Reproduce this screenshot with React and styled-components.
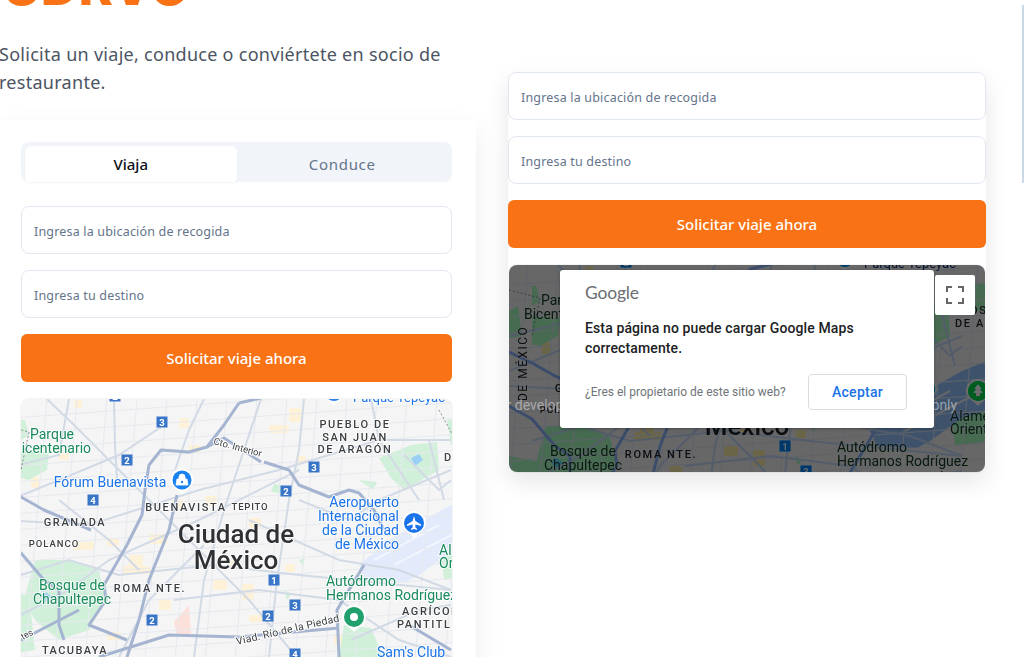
import styled, { createGlobalStyle } from 'styled-components';

const GlobalStyle = createGlobalStyle`
  html, body {
    margin: 0;
    padding: 0;
    background: #fff;
    overflow: hidden;
  }
  * { box-sizing: border-box; }
`;

const Page = styled.div`
  position: relative;
  width: 1024px;
  height: 657px;
  overflow: hidden;
  background: #fff;
  font-family: "Noto Sans", "Open Sans", sans-serif;
  display: grid;
  grid-template-columns: 476px 478px;
  column-gap: 32px;
  align-items: start;
`;

const ScrollThumb = styled.div`
  position: absolute;
  top: 5px;
  right: 0;
  width: 2px;
  height: 178px;
  background: #cbd9e6;
`;

const LeftColumn = styled.div`
  display: flex;
  flex-direction: column;
`;

const Brand = styled.h1`
  margin: -38px 0 0 3px;
  height: 50px;
  font-family: Inter, sans-serif;
  font-size: 52px;
  line-height: 50px;
  font-weight: 800;
  color: #f97316;
  white-space: nowrap;
`;

const Tagline = styled.p`
  margin: 28px 0 0 -1px;
  width: 470px;
  font-size: 18px;
  line-height: 28px;
  letter-spacing: 0.28px;
  color: #4b5563;
`;

const Card = styled.section`
  margin-top: 24px;
  padding: 22px 24px 0 21px;
  background: #fff;
  box-shadow: 0 10px 25px rgba(0, 0, 0, 0.08);
  display: flex;
  flex-direction: column;
  gap: 24px;
`;

const Tabs = styled.div`
  display: flex;
  flex: none;
  height: 40px;
  padding: 4px 4px 0;
  background: #f1f5f9;
  border-radius: 8px;
`;

const Tab = styled.div`
  flex: 1;
  display: flex;
  align-items: center;
  justify-content: center;
  font-size: 15px;
  font-weight: ${(props) => (props.$active ? 500 : 400)};
  letter-spacing: ${(props) => (props.$active ? '0' : '0.7px')};
  border-radius: 6px 6px 4px 4px;
  color: ${(props) => (props.$active ? '#0b0f19' : '#64748b')};
  background: ${(props) => (props.$active ? '#fff' : 'transparent')};
  box-shadow: ${(props) => (props.$active ? '0 1px 2px rgba(0,0,0,0.05)' : 'none')};
`;

const RightColumn = styled.div`
  margin-top: 72px;
  background: #fff;
  border-radius: 8px;
  box-shadow: 0 10px 25px rgba(0, 0, 0, 0.1);
`;

const Form = styled.div`
  display: flex;
  flex-direction: column;
  gap: 16px;
`;

const Field = styled.input`
  display: block;
  width: 100%;
  height: 48px;
  padding: 3px 12px 0;
  border: 1px solid #e2e8f0;
  border-radius: 8px;
  background: #fff;
  font-family: inherit;
  font-size: 12.5px;
  letter-spacing: 0.18px;
  outline: none;

  &::placeholder {
    color: #64748b;
    opacity: 1;
  }
`;

const Submit = styled.button`
  height: 48px;
  border: 0;
  border-radius: 6px;
  background: #f97316;
  color: #fff;
  font-family: inherit;
  font-size: 15px;
  font-weight: 500;
`;

const MapFrame = styled.div`
  position: relative;
  flex: none;
  margin: 1px ${(props) => props.$inset}px 0;
  height: ${(props) => props.$height}px;
  overflow: hidden;
  border-radius: 8px;
  background: #f5f5f6;
  box-shadow: 0 0 0 1px rgba(0, 0, 0, 0.04);
`;

const MapCanvas = styled.svg`
  display: block;
  margin-left: ${(props) => props.$shift}px;
  filter: ${(props) => (props.$dimmed ? 'saturate(2.8) brightness(0.42) blur(0.35px)' : 'blur(0.35px)')};
`;

const Watermark = styled.span`
  position: absolute;
  top: 132px;
  left: ${(props) => props.$left}px;
  font-family: Roboto, sans-serif;
  font-size: 14px;
  color: rgba(255, 255, 255, 0.45);
  white-space: nowrap;
`;

const Dialog = styled.div`
  position: absolute;
  top: 5px;
  left: 51px;
  width: 374px;
  height: 158px;
  padding: 12px 27px 0 25px;
  background: #fff;
  border-radius: 3px;
  box-shadow: 0 1px 3px rgba(0, 0, 0, 0.3);
  font-family: Roboto, sans-serif;
`;

const GoogleMark = styled.div`
  font-family: Lato, Roboto, sans-serif;
  font-size: 17.5px;
  line-height: 22px;
  letter-spacing: -0.2px;
  color: #6b6e72;
`;

const Message = styled.p`
  margin: 14px 0 0;
  font-size: 14px;
  line-height: 20px;
  font-weight: 500;
  letter-spacing: 0.12px;
  color: #202124;
`;

const DialogFooter = styled.div`
  margin-top: 16px;
  display: flex;
  align-items: center;
  justify-content: space-between;
`;

const Owner = styled.span`
  font-size: 12px;
  color: #70757a;
`;

const Accept = styled.button`
  width: 99px;
  height: 36px;
  background: #fff;
  border: 1px solid #dadce0;
  border-radius: 4px;
  font-family: inherit;
  font-size: 14px;
  font-weight: 500;
  letter-spacing: 0.3px;
  color: #1a73e8;
`;

const Fullscreen = styled.div`
  position: absolute;
  top: 10px;
  right: 10px;
  width: 40px;
  height: 40px;
  display: flex;
  align-items: center;
  justify-content: center;
  background: #fff;
  border-radius: 2px;
`;

const MAJOR = [
  'M240 403L225 425L208 447L190 452L162 450L150 465L146 490L143 515L128 545L105 585L107 600L90 625L128 640',
  'M178 495L170 530L150 580L140 620L128 657',
  'M22 497L45 510L92 530',
  'M-1 486L22 497',
  'M-1 540L22 553L45 580L60 590L60 625L65 640',
  'M-1 655L22 640L80 610',
  'M100 657L170 635L240 637L340 628',
  'M265 462L290 470L300 485L330 497L350 490L360 493L375 510L385 530',
  'M365 565L350 590L338 610L340 657',
  'M410 625L452 650',
  'M240 403L262 398',
  'M208 447L225 438L262 462',
];

const MINOR = [
  'M48 399L75 425L120 470L150 500L190 540L250 600L300 660',
  'M115 399L116 445L118 480',
  'M-1 505L60 480L120 455L165 425',
  'M22 575L70 560L120 575L215 565L300 575L452 590',
  'M0 520L90 525L200 490L280 470L380 440L452 440',
  'M262 399L245 450L225 510L205 580L195 657',
  'M305 399L300 450L290 500L278 580L270 657',
  'M205 399L190 430L176 470',
  'M372 399L380 440L400 470L420 500',
  'M0 470L60 455L70 399',
  'M22 615L70 590L110 560L200 520L300 470',
  'M175 600L260 590L340 600L400 640L452 657',
  'M300 500L350 520L380 500L452 470',
  'M120 657L150 600L205 545',
  'M250 520L340 560L400 570L452 590',
  'M60 500L110 540L140 570',
  'M352 640L420 610L452 605',
  'M405 455L440 490L452 480',
  'M430 440L445 500',
];

const STREETS = [];
for (let i = 0; i < 17; i++) {
  const x = i * 30 - 12;
  STREETS.push(`M${x} 399L${x - 22} 660`);
  const y = 399 + i * 16;
  STREETS.push(`M-1 ${y + 20}L476 ${y - 14}`);
}

const BLOCKS = [
  [75, 400, 8, 8], [32, 476, 8, 12], [74, 542, 22, 8], [130, 555, 14, 16], [150, 534, 18, 10], [172, 500, 14, 8],
  [206, 496, 12, 10], [124, 566, 28, 8], [108, 632, 14, 8], [290, 408, 12, 14], [270, 425, 20, 8], [297, 456, 10, 7],
  [250, 518, 12, 10], [243, 584, 12, 16], [230, 560, 10, 8], [160, 600, 12, 10], [286, 564, 10, 8], [250, 615, 14, 7],
  [214, 580, 14, 10], [335, 635, 20, 10], [190, 445, 12, 8], [108, 538, 12, 8], [60, 452, 10, 8], [180, 418, 10, 10],
];

const PARKS = [
  'M22 420L26 420L30 435L22 440Z',
  'M22 450L50 452L48 470L30 480L22 478Z',
  'M36 560L70 560L100 570L106 600L90 630L60 640L36 620L25 600Z',
  'M-1 590L30 596L36 650L-1 657Z',
  'M380 458L412 445L438 442L440 470L405 490L392 478Z',
  'M275 484L290 487L288 494L272 492Z',
  'M360 480L378 482L374 490Z',
  'M345 625L372 628L384 657L340 657Z',
  'M440 535L476 525L476 575L445 580Z',
  'M285 590L292 594L288 600Z',
  'M300 560L306 558L304 566Z',
  'M448 420L476 416L476 445L452 445Z',
  'M-1 445L8 440L12 470L-1 472Z',
];

const SHIELDS = [
  [116, 396, '2'], [163, 422, '3'], [128, 460, '2'], [94, 500, '4'], [153, 620, '2'],
  [315, 467, '3'], [287, 491, '2'], [275, 580, '1'], [296, 605, '3'], [269, 616, '2'], [296, 654, '4'],
];

const GREEN = '#188a5c';
const BLUE = '#1a73e8';
const INK = '#3c4043';

const LABELS = [
  { x: 53, y: 439, s: 14, c: GREEN, t: 'Parque' },
  { x: 53, y: 453, s: 14, c: GREEN, t: 'Bicentenario' },
  { x: 111, y: 487, s: 14, c: BLUE, t: 'Fórum Buenavista' },
  { x: 187, y: 511, s: 11, c: INK, t: 'BUENAVISTA', w: 500, ls: 1.6 },
  { x: 251, y: 510, s: 9.5, c: INK, t: 'TEPITO', w: 500, ls: 0.8 },
  { x: 76, y: 526, s: 11, c: INK, t: 'GRANADA', w: 500, ls: 1.6 },
  { x: 55, y: 547, s: 9.5, c: INK, t: 'POLANCO', w: 500, ls: 1 },
  { x: 73, y: 590, s: 14, c: GREEN, t: 'Bosque de' },
  { x: 73, y: 604, s: 14, c: GREEN, t: 'Chapultepec' },
  { x: 151, y: 592, s: 11, c: INK, t: 'ROMA NTE.', w: 500, ls: 1.6 },
  { x: 76, y: 654, s: 11, c: INK, t: 'TACUBAYA', w: 500, ls: 1.4 },
  { x: 237, y: 543, s: 26, c: '#303134', t: 'Ciudad de', w: 500 },
  { x: 237, y: 569, s: 26, c: '#303134', t: 'México', w: 500 },
  { x: 356, y: 428, s: 11, c: INK, t: 'PUEBLO DE', w: 500, ls: 1.6 },
  { x: 356, y: 441, s: 11, c: INK, t: 'SAN JUAN', w: 500, ls: 1.6 },
  { x: 356, y: 453, s: 11, c: INK, t: 'DE ARAGÓN', w: 500, ls: 1.6 },
  { x: 400, y: 402, s: 13, c: BLUE, t: 'Parque Tepeyac' },
  { x: 400, y: 507, s: 14, c: BLUE, t: 'Aeropuerto', a: 'end' },
  { x: 400, y: 521, s: 14, c: BLUE, t: 'Internacional', a: 'end' },
  { x: 400, y: 535, s: 14, c: BLUE, t: 'de la Ciudad', a: 'end' },
  { x: 400, y: 549, s: 14, c: BLUE, t: 'de México', a: 'end' },
  { x: 327, y: 586, s: 14, c: GREEN, t: 'Autódromo', a: 'start' },
  { x: 327, y: 600, s: 14, c: GREEN, t: 'Hermanos Rodríguez', a: 'start' },
  { x: 403, y: 615, s: 11, c: INK, t: 'AGRÍCOLA', w: 500, ls: 1.6, a: 'start' },
  { x: 398, y: 628, s: 11, c: INK, t: 'PANTITLÁN', w: 500, ls: 1.6, a: 'start' },
  { x: 378, y: 657, s: 14, c: BLUE, t: "Sam's Club", a: 'start' },
  { x: 440, y: 555, s: 14, c: GREEN, t: 'Alameda', a: 'start' },
  { x: 440, y: 568, s: 14, c: GREEN, t: 'Oriente', a: 'start' },
  { x: 445, y: 461, s: 11, c: INK, t: 'DE ARAGÓN', w: 500, ls: 1.6, a: 'start' },
  { x: 460, y: 448, s: 11, c: INK, t: 'OS', w: 500, ls: 1.6, a: 'start' },
];

const ROTATED = [
  { x: 214, y: 444, r: 15, s: 9.5, t: 'Cto. Interior' },
  { x: 238, y: 645, r: -13, s: 10.5, t: 'Viad. Río de la Piedad', ls: 0.2 },
  { x: 24, y: 640, r: -28, s: 9, t: 'tes' },
  { x: 17, y: 535, r: -90, s: 12, t: 'DE MÉXICO', ls: 1.5 },
];

function Pin({ x, y, r, color, children }) {
  return (
    <g transform={`translate(${x} ${y})`}>
      <path d={`M${-r - 2} 0A${r + 2} ${r + 2} 0 1 1 ${r + 2} 0C${r + 2} ${r * 0.7} 4 ${r} 0 ${r + 5}C-4 ${r} ${-r - 2} ${r * 0.7} ${-r - 2} 0Z`} fill="#fff" />
      <circle r={r} fill={color} />
      {children}
    </g>
  );
}

// under the dimmed layer the label colours read as near-black
const dimColour = (c) => {
  if (c === GREEN) return '#26352c';
  if (c === BLUE) return '#1d2a42';
  return '#202124';
};

function MapArt({ height, shift, dimmed }) {
  return (
    <MapCanvas $shift={shift} $dimmed={dimmed} width="476" height={height} viewBox={`-1 399 476 ${height}`}>
      <rect x="-1" y="399" width="476" height="262" fill="#f5f5f6" />
      {BLOCKS.map(([x, y, w, h]) => (
        <rect key={`${x}-${y}`} x={x} y={y} width={w} height={h} rx="2" fill="#fdf1d8" />
      ))}
      <path d="M175 622L190 605L192 634L178 636Z" fill="#fde0da" />
      {PARKS.map((d) => (
        <path key={d} d={d} fill="#d0f0da" />
      ))}
      <path
        d="M360 565L390 540L452 505L476 495L476 545L452 552L420 575L407 582L367 580Z"
        fill={dimmed ? '#b4c6fb' : '#e2eafb'}
      />
      <path d="M375 560L440 525M395 565L462 530" stroke="#f2f5fd" strokeWidth="2" />
      <path d="M412 458l8 -4l4 6l-8 6z" fill="#9ccff5" />
      <path d="M44 590l8 6l-2 8l-8 -6z" fill="#9ccff5" />
      {STREETS.map((d) => (
        <path key={d} d={d} fill="none" stroke="#e6e9ee" strokeWidth="1" />
      ))}
      {MINOR.map((d) => (
        <path key={d} d={d} fill="none" stroke="#d2dae5" strokeWidth="2" />
      ))}
      {MAJOR.map((d) => (
        <path key={d} d={d} fill="none" stroke="#a5b4d0" strokeWidth="3" strokeLinejoin="round" />
      ))}
      <path d="M440 410L452 432L462 440" fill="none" stroke="#8a8f98" strokeWidth="1" strokeDasharray="2 2" />
      <path d="M-1 424L30 432L22 470" fill="none" stroke="#8a8f98" strokeWidth="1" strokeDasharray="2 2" />
      {SHIELDS.map(([x, y, n]) => (
        <g key={`${x}-${y}`}>
          <rect x={x - 5.5} y={y - 5.5} width="11" height="11" fill="#3a76c8" />
          <text x={x} y={y + 3.5} textAnchor="middle" fontFamily="Roboto, sans-serif" fontSize="9.5" fontWeight="700" fill="#fff">{n}</text>
        </g>
      ))}
      {LABELS.map((l) => (
        <text
          key={`${l.t}-${l.y}`}
          x={l.x}
          y={l.y}
          textAnchor={l.a || 'middle'}
          fontFamily="Roboto, sans-serif"
          fontSize={l.s}
          fontWeight={l.w || 400}
          letterSpacing={l.ls || 0}
          fill={dimmed ? dimColour(l.c) : l.c}
          stroke="#fff"
          strokeWidth="2"
          strokeOpacity={dimmed ? 0.2 : 0.75}
          paintOrder="stroke"
        >
          {l.t}
        </text>
      ))}
      {ROTATED.map((l) => (
        <text
          key={l.t}
          transform={`translate(${l.x} ${l.y}) rotate(${l.r})`}
          fontFamily="Roboto, sans-serif"
          fontSize={l.s}
          letterSpacing={l.ls || 0}
          fill={dimmed ? '#202124' : INK}
          stroke="#fff"
          strokeWidth="2"
          strokeOpacity={dimmed ? 0.2 : 1}
          paintOrder="stroke"
        >
          {l.t}
        </text>
      ))}
      <Pin x={335} y={392} r={9} color="#2f80ed" />
      <Pin x={183} y={480} r={9.5} color="#1a82f0">
        <path d="M-5 -1H5L6 5H-6ZM-3 -1V-3A3 3 0 0 1 3 -3V-1" fill="#fff" stroke="#fff" strokeWidth="0.8" />
        <circle r="1.2" cy="2" fill="#1a82f0" />
      </Pin>
      <Pin x={415} y={523} r={10} color="#1a73e8">
        <path d="M0 -7L1.4 -2L7 1.6V3L1.4 1.4V4.6L3 5.8V7L0 6L-3 7V5.8L-1.4 4.6V1.4L-7 3V1.6L-1.4 -2Z" fill="#fff" />
      </Pin>
      <Pin x={355} y={617} r={10} color="#1fa06d">
        <circle r="4" fill="#fff" />
      </Pin>
      <Pin x={468} y={525} r={10} color="#1fa06d">
        <path d="M0 -7L4 -2H2L5 2H2V5H-2V2H-5L-2 -2H-4Z" fill="#fff" />
      </Pin>
    </MapCanvas>
  );
}

function RideForm() {
  return (
    <>
      <Field placeholder="Ingresa la ubicación de recogida" />
      <Field placeholder="Ingresa tu destino" />
      <Submit>Solicitar viaje ahora</Submit>
    </>
  );
}

export default function App() {
  return (
    <Page>
      <GlobalStyle />
      <LeftColumn>
        <Brand>UDRVO</Brand>
        <Tagline>Solicita un viaje, conduce o conviértete en socio de restaurante.</Tagline>
        <Card>
          <Tabs>
            <Tab $active>Viaja</Tab>
            <Tab>Conduce</Tab>
          </Tabs>
          <Form>
            <RideForm />
            <MapFrame $inset={0} $height={280}>
              <MapArt height={262} shift={-23} />
            </MapFrame>
          </Form>
        </Card>
      </LeftColumn>
      <RightColumn>
        <Form>
          <RideForm />
          <MapFrame $inset={1} $height={207}>
            <MapArt height={207} shift={0} dimmed />
            <Watermark $left={-18}>For development purposes only</Watermark>
            <Watermark $left={253}>For development purposes only</Watermark>
            <Dialog>
              <GoogleMark>Google</GoogleMark>
              <Message>Esta página no puede cargar Google Maps correctamente.</Message>
              <DialogFooter>
                <Owner>¿Eres el propietario de este sitio web?</Owner>
                <Accept>Aceptar</Accept>
              </DialogFooter>
            </Dialog>
            <Fullscreen>
              <svg width="18" height="18" viewBox="0 0 18 18" fill="none" stroke="#666" strokeWidth="2">
                <path d="M1 6V1H6M12 1H17V6M17 12V17H12M6 17H1V12" />
              </svg>
            </Fullscreen>
          </MapFrame>
        </Form>
      </RightColumn>
      <ScrollThumb />
    </Page>
  );
}
